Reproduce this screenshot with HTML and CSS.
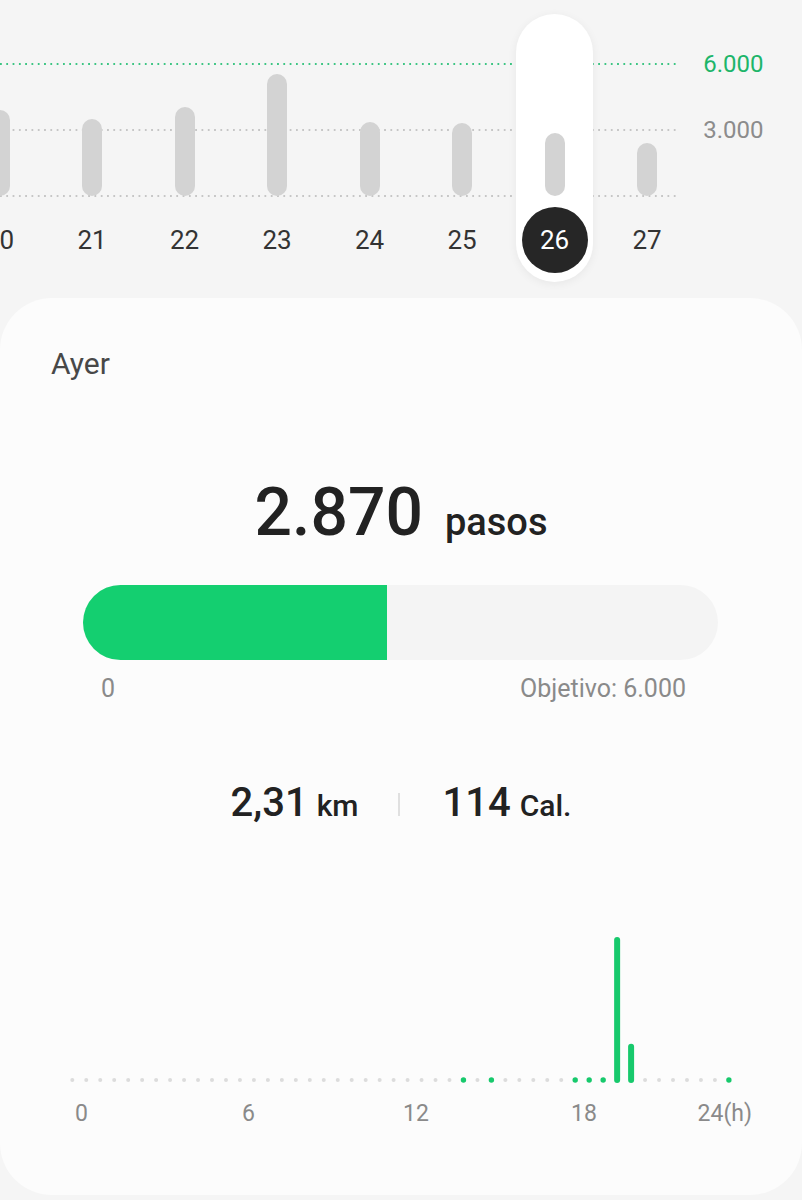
FILE: index.html
```html
<!DOCTYPE html>
<html lang="es">
<head>
    <meta charset="UTF-8">
    <meta name="viewport" content="width=device-width, initial-scale=1">
    <title>Pasos</title>
    <link rel="stylesheet" href="styles.css">
</head>
<body>
    <section class="trend">
        <div class="grid-line line-goal"></div>
        <div class="grid-line line-mid"></div>
        <div class="grid-line line-zero"></div>

        <div class="trend-row">
            <div class="day"><div class="day-inner"><div class="bar-area"><div class="bar" style="height: 86px"></div></div><span class="day-label">20</span></div></div>
            <div class="day"><div class="day-inner"><div class="bar-area"><div class="bar" style="height: 77px"></div></div><span class="day-label">21</span></div></div>
            <div class="day"><div class="day-inner"><div class="bar-area"><div class="bar" style="height: 89px"></div></div><span class="day-label">22</span></div></div>
            <div class="day"><div class="day-inner"><div class="bar-area"><div class="bar" style="height: 122px"></div></div><span class="day-label">23</span></div></div>
            <div class="day"><div class="day-inner"><div class="bar-area"><div class="bar" style="height: 74px"></div></div><span class="day-label">24</span></div></div>
            <div class="day"><div class="day-inner"><div class="bar-area"><div class="bar" style="height: 73px"></div></div><span class="day-label">25</span></div></div>
            <div class="day selected"><div class="day-inner"><div class="bar-area"><div class="bar" style="height: 63px"></div></div><span class="day-label">26</span></div></div>
            <div class="day"><div class="day-inner"><div class="bar-area"><div class="bar" style="height: 53px"></div></div><span class="day-label">27</span></div></div>

            <div class="axis">
                <span class="axis-goal">6.000</span>
                <span>3.000</span>
            </div>
        </div>
    </section>

    <section class="card">
        <h2 class="card-title">Ayer</h2>

        <div class="total">
            <span class="total-value">2.870</span><span class="total-unit">pasos</span>
        </div>

        <div class="progress">
            <div class="progress-fill" style="width: 47.83%"></div>
        </div>
        <div class="progress-labels">
            <span>0</span>
            <span>Objetivo: 6.000</span>
        </div>

        <div class="stats">
            <span class="stat">2,31<span class="stat-unit">km</span></span>
            <span class="stat-sep"></span>
            <span class="stat">114<span class="stat-unit">Cal.</span></span>
        </div>

        <svg class="hourly" width="802" height="240" viewBox="0 0 802 240">
            <g class="slots"></g>
            <text x="81.5" y="218" text-anchor="middle">0</text>
            <text x="248.5" y="218" text-anchor="middle">6</text>
            <text x="416" y="218" text-anchor="middle">12</text>
            <text x="584" y="218" text-anchor="middle">18</text>
            <text x="752" y="218" text-anchor="end">24(h)</text>
        </svg>
    </section>

    <script>
        // steps per half hour, 48 slots
        const slots = new Array(48).fill(0);
        slots[28] = 40;
        slots[30] = 30;
        slots[36] = 50;
        slots[37] = 40;
        slots[38] = 60;
        slots[39] = 2100;
        slots[40] = 500;
        slots[47] = 50;

        const ns = 'http://www.w3.org/2000/svg';
        const group = document.querySelector('.hourly .slots');
        const baseY = 177;
        const scale = 140 / 2100;

        slots.forEach((value, i) => {
            const x = 72.3 + i * 13.97;
            const h = value * scale;
            if (h > 6) {
                const line = document.createElementNS(ns, 'line');
                line.setAttribute('x1', x);
                line.setAttribute('x2', x);
                line.setAttribute('y1', baseY);
                line.setAttribute('y2', baseY - h);
                line.setAttribute('class', 'slot-bar');
                group.appendChild(line);
            } else {
                const dot = document.createElementNS(ns, 'circle');
                dot.setAttribute('cx', x);
                dot.setAttribute('cy', baseY);
                dot.setAttribute('r', value > 0 ? 2.7 : 2);
                dot.setAttribute('class', value > 0 ? 'slot-dot active' : 'slot-dot');
                group.appendChild(dot);
            }
        });
    </script>
</body>
</html>
```

FILE: styles.css
```css
body {
    margin: 0;
    padding: 0;
    background-color: #f5f5f5;
    font-family: Roboto, 'Noto Sans', sans-serif;
    color: #222;
    overflow-x: hidden;
}

/* week chart */

.trend {
    position: relative;
    height: 298px;
}

.grid-line {
    position: absolute;
    left: 0;
    width: 678px;
    height: 2px;
    background-image: linear-gradient(to right, #c6c6c6 2px, transparent 2px);
    background-size: 6.3px 2px;
}

.line-goal {
    top: 63px;
    background-image: linear-gradient(to right, #3cc583 2px, transparent 2px);
}

.line-mid {
    top: 129px;
}

.line-zero {
    top: 195px;
}

.trend-row {
    position: relative;
    z-index: 1;
    display: flex;
    margin-left: -46.75px;
}

.day {
    flex-shrink: 0;
    width: 92.5px;
    display: flex;
    justify-content: center;
}

.day-inner {
    width: 77px;
    height: 268px;
    margin-top: 14px;
    border-radius: 38.5px;
    display: flex;
    flex-direction: column;
    align-items: center;
}

.day.selected .day-inner {
    background-color: #fff;
    box-shadow: 0 2px 10px rgba(0, 0, 0, 0.06);
}

.bar-area {
    height: 182px;
    display: flex;
    align-items: flex-end;
}

.bar {
    width: 20px;
    border-radius: 10px;
    background-color: #d3d3d3;
}

.day-label {
    margin-top: 11px;
    width: 66px;
    height: 66px;
    line-height: 66px;
    border-radius: 50%;
    text-align: center;
    font-size: 26px;
    color: #333;
}

.day.selected .day-label {
    background-color: #262626;
    color: #fff;
}

.axis {
    flex-shrink: 0;
    display: flex;
    flex-direction: column;
    gap: 34px;
    padding: 48px 0 0 10px;
    font-size: 24px;
    line-height: 32px;
    color: #8c8c8c;
}

.axis-goal {
    color: #1db56a;
}

/* day card */

.card {
    background-color: #fcfcfc;
    border-radius: 52px;
    padding: 48px 0 52px;
}

.card-title {
    margin: 0 0 0 51px;
    font-size: 30px;
    line-height: 36px;
    font-weight: 400;
    color: #484848;
}

.total {
    margin-top: 91.5px;
    text-align: center;
    font-size: 66px;
    line-height: 78px;
    color: #222;
}

.total-value {
    font-weight: 500;
}

.total-unit {
    margin-left: 22px;
    font-size: 38px;
    line-height: 1;
    font-weight: 500;
}

.progress {
    margin: 33.5px 84px 0 83px;
    height: 75px;
    border-radius: 37.5px;
    background-color: #f4f4f4;
    overflow: hidden;
}

.progress-fill {
    height: 100%;
    background-color: #14cf70;
}

.progress-labels {
    display: flex;
    justify-content: space-between;
    margin: 15px 116px 0 101px;
    font-size: 25px;
    line-height: 28px;
    color: #8a8a8a;
}

.stats {
    margin-top: 76px;
    display: flex;
    justify-content: center;
    align-items: center;
    line-height: 48px;
}

.stat {
    font-size: 40px;
    font-weight: 500;
    color: #222;
}

.stat-unit {
    margin-left: 9px;
    font-size: 30px;
    font-weight: 500;
}

.stat-sep {
    width: 2px;
    height: 23px;
    margin: 0 42px 0 40px;
    background-color: #e0e0e0;
}

.hourly {
    display: block;
    margin-top: 73px;
}

.hourly text {
    font-family: Roboto, sans-serif;
    font-size: 23px;
    fill: #8a8a8a;
}

.slot-dot {
    fill: #dcdcdc;
}

.slot-dot.active {
    fill: #17c96c;
}

.slot-bar {
    stroke: #17c96c;
    stroke-width: 6;
    stroke-linecap: round;
}
```
